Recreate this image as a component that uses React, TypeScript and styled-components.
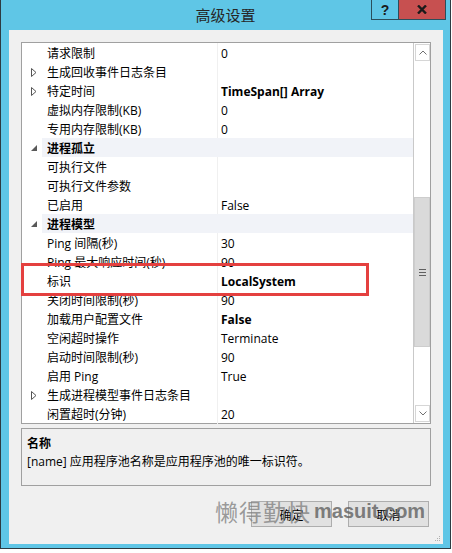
import React from "react";
import styled, { createGlobalStyle } from "styled-components";

const GlobalStyle = createGlobalStyle`
  html, body { margin: 0; padding: 0; background: #ffffff; }
  body { font-family: "Open Sans", "Noto Sans CJK SC", sans-serif; font-size: 12px; color: #000; }
  * { box-sizing: border-box; }
`;

const Window = styled.div`
  width: 451px;
  height: 549px;
  background: #5fc6e6;
  border-left: 1px solid #2d3b42;
  border-right: 1px solid #2d3b42;
  border-bottom: 1px solid #2d3b42;
  display: flex;
  flex-direction: column;
`;

const TitleBar = styled.div`
  height: 30px;
  flex: none;
  display: grid;
  grid-template-columns: 1fr auto 1fr;
  align-items: start;
`;

const Title = styled.div`
  grid-column: 2;
  line-height: 30px;
  font-family: "Noto Sans CJK SC", sans-serif;
  font-size: 15px;
  color: #262626;
`;

const Controls = styled.div`
  grid-column: 3;
  justify-self: end;
  display: flex;
  margin-right: 4px;
`;

const CtrlButton = styled.div<{ $close?: boolean }>`
  width: ${(p) => (p.$close ? "47px" : "28px")};
  height: 20px;
  display: flex;
  align-items: center;
  justify-content: center;
  background: ${(p) => (p.$close ? "#c75050" : "transparent")};
  border: 1px solid #2a4f5c;
  border-top: none;
  ${(p) => (p.$close ? "border-left: none;" : "")}
  font-family: "Liberation Sans", sans-serif;
  font-weight: 700;
  font-size: 14px;
  color: #1a1a1a;
`;

const Client = styled.div`
  position: relative;
  flex: 1;
  margin: 0 7px 4px 8px;
  background: #f0f0f0;
  padding: 12px 12px 0 12px;
  display: flex;
  flex-direction: column;
`;

const Grid = styled.div`
  position: relative;
  height: 382px;
  border: 1px solid #a0a0a0;
  background: #ffffff;
  display: flex;
`;

const Rows = styled.div`
  flex: 1;
  display: flex;
  flex-direction: column;
`;

const Row = styled.div`
  height: 19px;
  display: grid;
  grid-template-columns: 20px 176px 1fr;
  background: #fff;
`;

const Margin = styled.div`
  display: flex;
  align-items: center;
  padding-left: 9px;
`;

const NameCell = styled.div`
  border-right: 1px solid #f0f0f0;
  border-bottom: 1px solid #f0f0f0;
  padding: 2px 0 0 5px;
  line-height: 18px;
  white-space: nowrap;
`;

const ValueCell = styled.div<{ $bold?: boolean }>`
  border-bottom: 1px solid #f0f0f0;
  padding: 2px 0 0 3px;
  line-height: 18px;
  font-weight: ${(p) => (p.$bold ? 700 : 400)};
  white-space: nowrap;
`;

const CategoryCell = styled.div`
  grid-column: 2 / 4;
  background: #f1f3f8;
  padding: 2px 0 0 5px;
  line-height: 18px;
  font-weight: 700;
`;

const Scrollbar = styled.div`
  width: 17px;
  flex: none;
  border-left: 1px solid #c9c9c9;
  display: flex;
  flex-direction: column;
  background: #fff;
`;

const ArrowButton = styled.div`
  height: 17px;
  margin: 1px 0 1px 1px;
  border: 1px solid #d6d6d6;
  display: flex;
  align-items: center;
  justify-content: center;
  flex: none;
`;

const TrackSpace = styled.div<{ $h: number }>`
  height: ${(p) => p.$h}px;
  flex: none;
`;

const Thumb = styled.div`
  height: 150px;
  flex: none;
  background: #dadada;
  border: 1px solid #cdcdcd;
  display: flex;
  align-items: center;
  justify-content: center;
`;

const Highlight = styled.div`
  position: absolute;
  left: -1px;
  top: 220px;
  width: 348px;
  height: 33px;
  border: 3px solid #e4403f;
  pointer-events: none;
`;

const Description = styled.div`
  margin-top: 4px;
  height: 58px;
  border: 1px solid #a0a0a0;
  padding: 6px 5px 0 5px;
`;

const DescTitle = styled.div`
  font-family: "Noto Sans CJK SC", sans-serif;
  font-weight: 700;
  line-height: 16px;
`;

const DescText = styled.div`
  margin-top: 2px;
  line-height: 18px;
`;

const ButtonRow = styled.div`
  position: relative;
  margin-top: 15px;
  display: flex;
  justify-content: flex-end;
  gap: 16px;
  padding-right: 2px;
`;

const Button = styled.div`
  width: 81px;
  height: 26px;
  background: #e1e1e1;
  border: 1px solid #adadad;
  display: flex;
  align-items: center;
  justify-content: center;
  font-family: "Noto Sans CJK SC", sans-serif;
  font-size: 12px;
`;

const Watermark = styled.div`
  position: absolute;
  left: 194px;
  top: -3px;
  height: 26px;
  display: flex;
  align-items: center;
  gap: 3px;
  pointer-events: none;
  white-space: nowrap;
`;

const WmCn = styled.span`
  font-family: "Noto Sans CJK SC", serif;
  font-size: 23px;
  color: rgba(125, 125, 125, 0.75);
  letter-spacing: 1px;
`;

const WmEn = styled.span`
  font-family: "Liberation Sans", sans-serif;
  font-weight: 700;
  font-size: 20px;
  color: rgba(95, 95, 95, 0.8);
`;

const Grip = styled.svg`
  position: absolute;
  right: 2px;
  bottom: 2px;
`;

type Item =
  | { category: string }
  | { name: string; value: string; bold?: boolean; expander?: boolean };

const items: Item[] = [
  { name: "请求限制", value: "0" },
  { name: "生成回收事件日志条目", value: "", expander: true },
  { name: "特定时间", value: "TimeSpan[] Array", bold: true, expander: true },
  { name: "虚拟内存限制(KB)", value: "0" },
  { name: "专用内存限制(KB)", value: "0" },
  { category: "进程孤立" },
  { name: "可执行文件", value: "" },
  { name: "可执行文件参数", value: "" },
  { name: "已启用", value: "False" },
  { category: "进程模型" },
  { name: "Ping 间隔(秒)", value: "30" },
  { name: "Ping 最大响应时间(秒)", value: "90" },
  { name: "标识", value: "LocalSystem", bold: true },
  { name: "关闭时间限制(秒)", value: "90" },
  { name: "加载用户配置文件", value: "False", bold: true },
  { name: "空闲超时操作", value: "Terminate" },
  { name: "启动时间限制(秒)", value: "90" },
  { name: "启用 Ping", value: "True" },
  { name: "生成进程模型事件日志条目", value: "", expander: true },
  { name: "闲置超时(分钟)", value: "20" },
];

const Collapsed = () => (
  <svg width="6" height="9" viewBox="0 0 6 9">
    <path d="M0.5 0.5 L5 4.5 L0.5 8.5 Z" fill="#fff" stroke="#555" strokeWidth="1" />
  </svg>
);

const Expanded = () => (
  <svg width="6" height="6" viewBox="0 0 6 6">
    <path d="M6 0 L6 6 L0 6 Z" fill="#595959" />
  </svg>
);

export default function App() {
  return (
    <>
      <GlobalStyle />
      <Window>
        <TitleBar>
          <Title>高级设置</Title>
          <Controls>
            <CtrlButton>?</CtrlButton>
            <CtrlButton $close>
              <svg width="10" height="9" viewBox="0 0 10 9">
                <path d="M1 0.5 L9 8.5 M9 0.5 L1 8.5" stroke="#1a1a1a" strokeWidth="2.4" />
              </svg>
            </CtrlButton>
          </Controls>
        </TitleBar>
        <Client>
          <Grid>
            <Rows>
              {items.map((it, i) =>
                "category" in it ? (
                  <Row key={i}>
                    <Margin>
                      <Expanded />
                    </Margin>
                    <CategoryCell>{it.category}</CategoryCell>
                  </Row>
                ) : (
                  <Row key={i}>
                    <Margin>{it.expander ? <Collapsed /> : null}</Margin>
                    <NameCell>{it.name}</NameCell>
                    <ValueCell $bold={it.bold}>{it.value}</ValueCell>
                  </Row>
                )
              )}
            </Rows>
            <Scrollbar>
              <ArrowButton>
                <svg width="8" height="5" viewBox="0 0 8 5">
                  <path d="M0.5 4.5 L4 1 L7.5 4.5" fill="none" stroke="#707070" strokeWidth="1" />
                </svg>
              </ArrowButton>
              <TrackSpace $h={135} />
              <Thumb>
                <svg width="7" height="7" viewBox="0 0 7 7">
                  <path d="M0 0.5 H7 M0 3.5 H7 M0 6.5 H7" stroke="#606060" strokeWidth="1.2" />
                </svg>
              </Thumb>
              <TrackSpace $h={57} />
              <ArrowButton>
                <svg width="8" height="5" viewBox="0 0 8 5">
                  <path d="M0.5 0.5 L4 4 L7.5 0.5" fill="none" stroke="#707070" strokeWidth="1" />
                </svg>
              </ArrowButton>
            </Scrollbar>
            <Highlight />
          </Grid>
          <Description>
            <DescTitle>名称</DescTitle>
            <DescText>[name] 应用程序池名称是应用程序池的唯一标识符。</DescText>
          </Description>
          <ButtonRow>
            <Button>确定</Button>
            <Button>取消</Button>
            <Watermark>
              <WmCn>懒得勤快</WmCn>
              <WmEn>masuit.com</WmEn>
            </Watermark>
          </ButtonRow>
          <Grip width="6" height="6" viewBox="0 0 6 6">
            <rect x="4" y="0" width="1" height="1" fill="#b0b0b0" />
            <rect x="2" y="2" width="1" height="1" fill="#b0b0b0" />
            <rect x="4" y="2" width="1" height="1" fill="#b0b0b0" />
            <rect x="0" y="4" width="1" height="1" fill="#b0b0b0" />
            <rect x="2" y="4" width="1" height="1" fill="#b0b0b0" />
            <rect x="4" y="4" width="1" height="1" fill="#b0b0b0" />
          </Grip>
        </Client>
      </Window>
    </>
  );
}
